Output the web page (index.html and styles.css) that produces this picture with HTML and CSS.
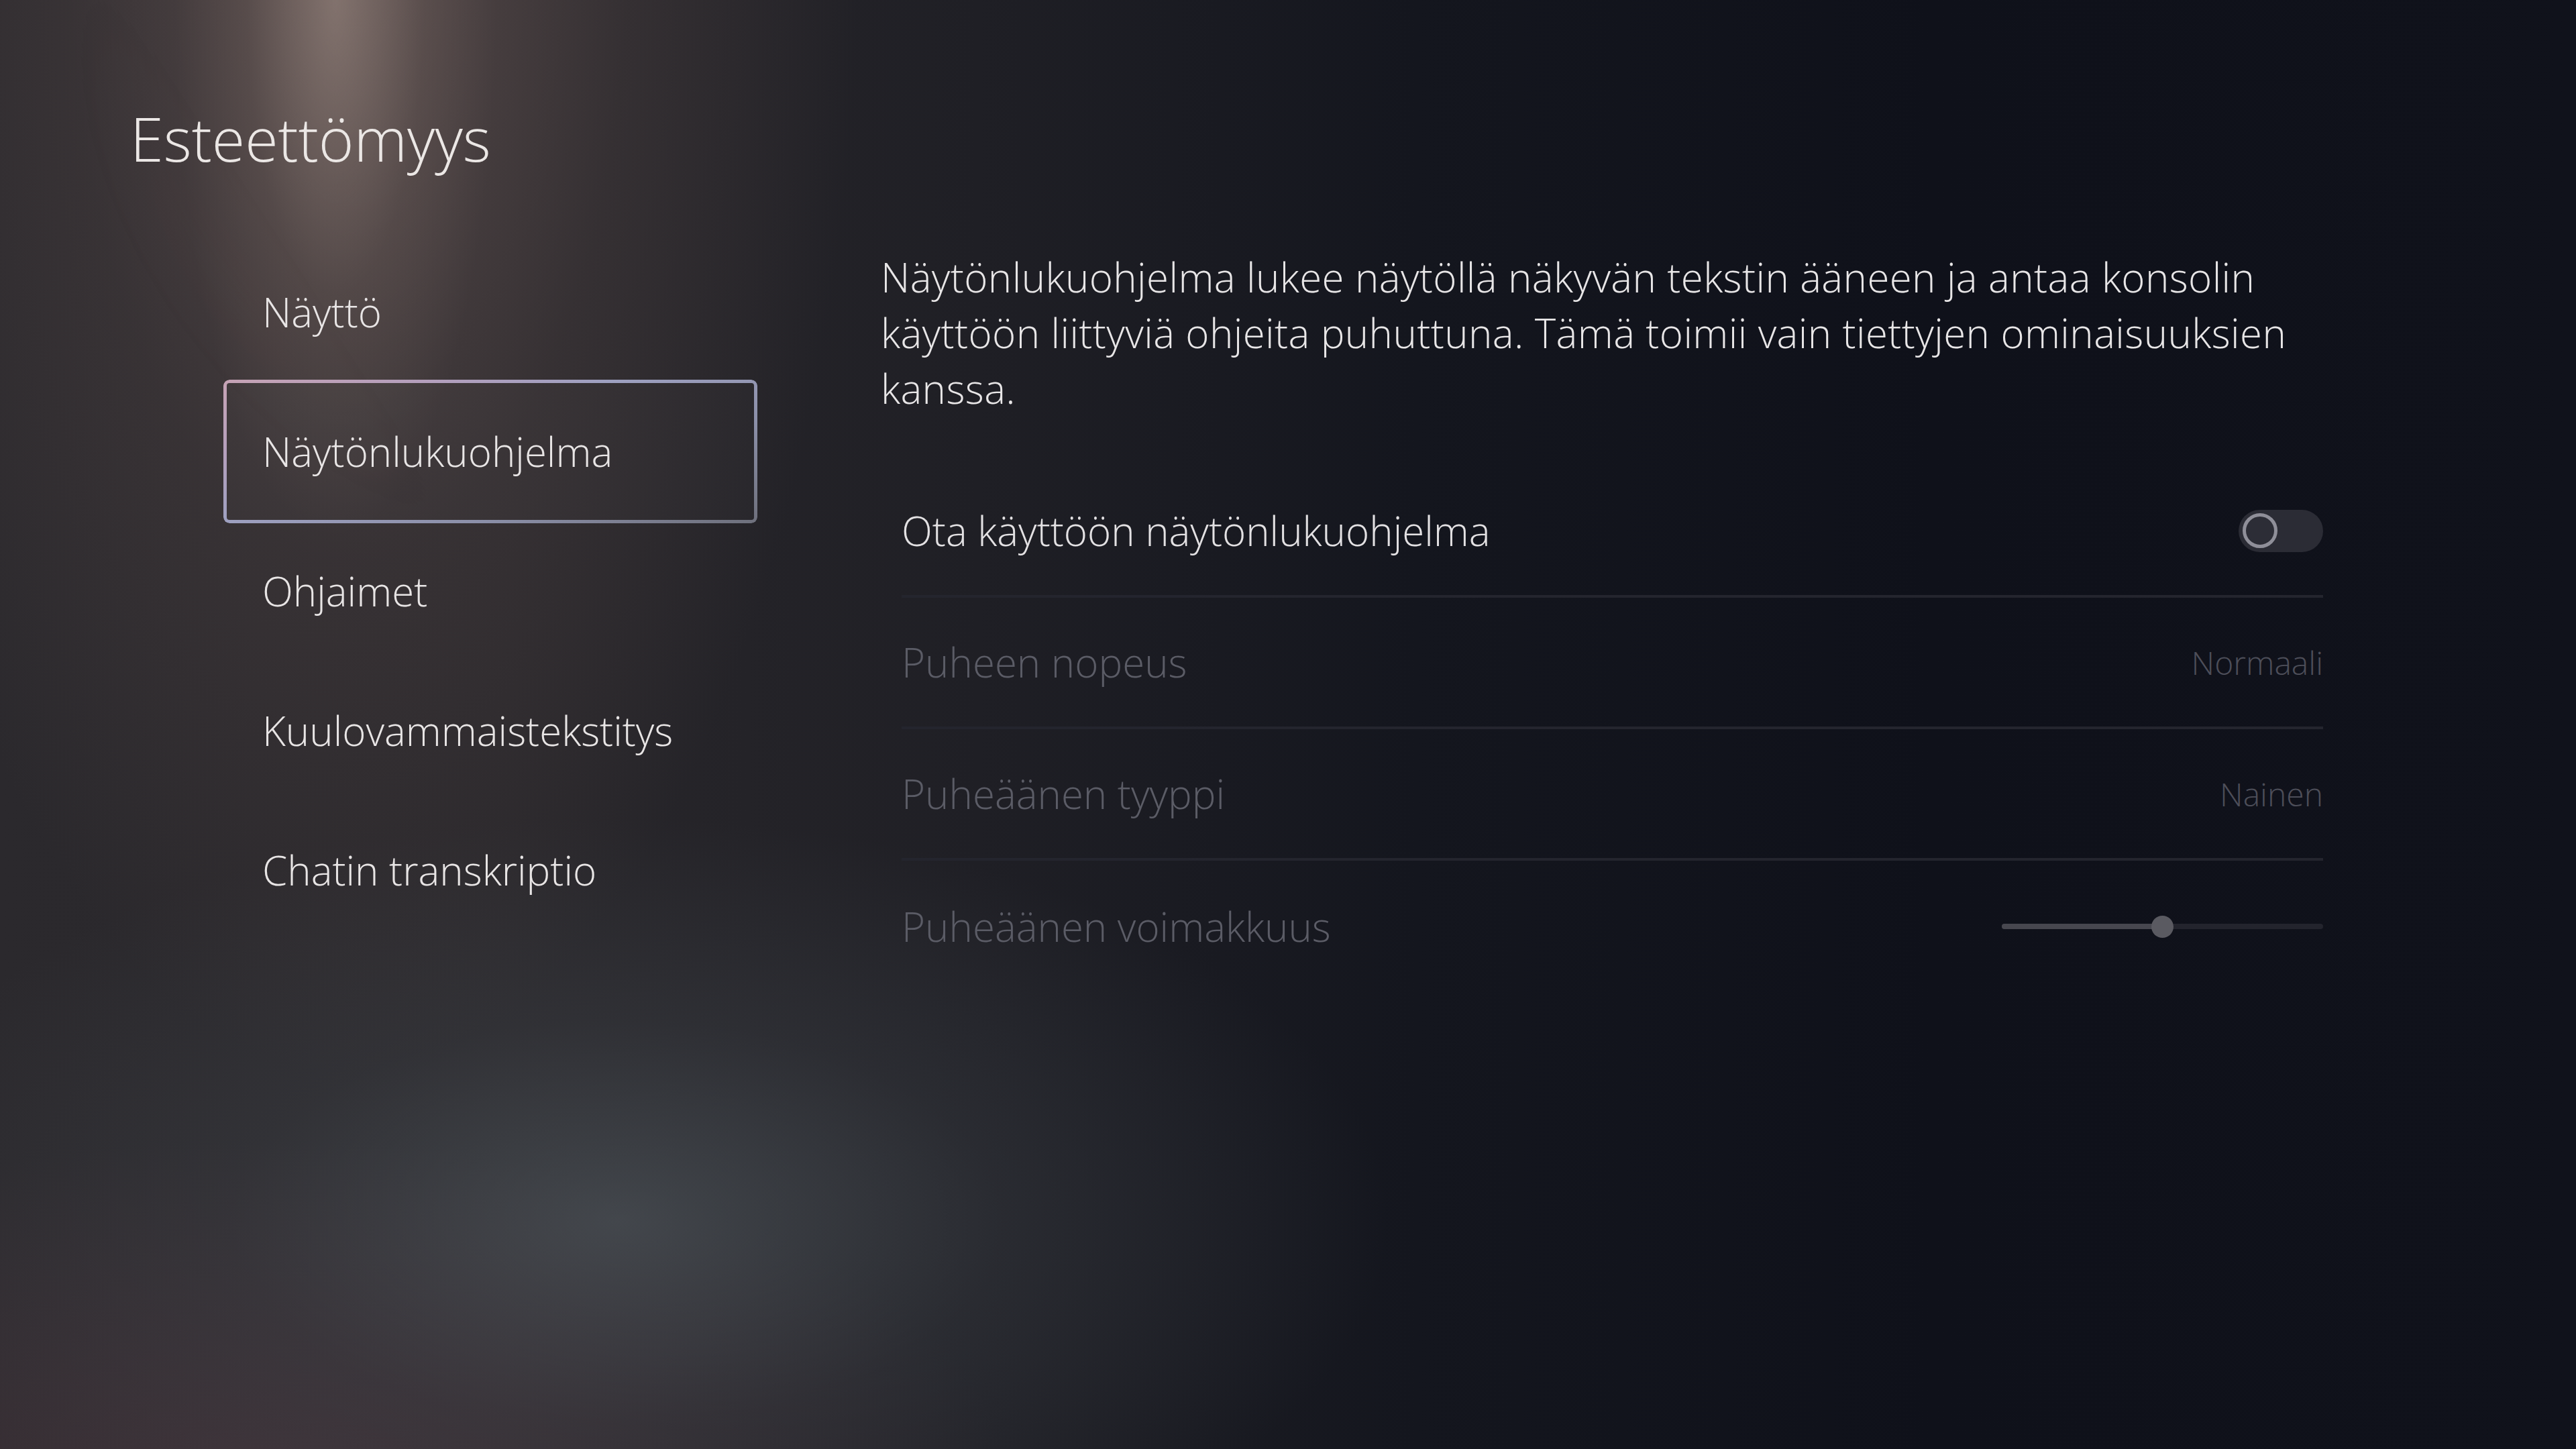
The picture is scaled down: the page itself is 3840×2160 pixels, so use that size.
FILE: index.html
```html
<!DOCTYPE html>
<html lang="fi">
<head>
<meta charset="utf-8">
<title>Esteettömyys</title>
<link rel="stylesheet" href="styles.css">
</head>
<body>
<div class="screen">
  <div class="beam"></div>
  <h1 class="title">Esteettömyys</h1>
  <div class="main">
    <nav class="nav">
      <div class="nav-item">Näyttö</div>
      <div class="nav-item selected">Näytönlukuohjelma</div>
      <div class="nav-item">Ohjaimet</div>
      <div class="nav-item">Kuulovammaistekstitys</div>
      <div class="nav-item">Chatin transkriptio</div>
    </nav>
    <section class="content">
      <p class="desc">Näytönlukuohjelma lukee näytöllä näkyvän tekstin ääneen ja antaa konsolin käyttöön liittyviä ohjeita puhuttuna. Tämä toimii vain tiettyjen ominaisuuksien kanssa.</p>
      <div class="list">
        <div class="row">
          <span class="label">Ota käyttöön näytönlukuohjelma</span>
          <span class="toggle"><span class="knob"></span></span>
        </div>
        <div class="row disabled">
          <span class="label">Puheen nopeus</span>
          <span class="value">Normaali</span>
        </div>
        <div class="row disabled">
          <span class="label">Puheäänen tyyppi</span>
          <span class="value">Nainen</span>
        </div>
        <div class="row disabled last">
          <span class="label">Puheäänen voimakkuus</span>
          <span class="slider"><span class="fill" style="width:50%"></span><span class="thumb"></span></span>
        </div>
      </div>
    </section>
  </div>
</div>
</body>
</html>
```
FILE: styles.css
```css
html, body {
  margin: 0;
  padding: 0;
}
body {
  width: 3840px;
  height: 2160px;
  overflow: hidden;
  font-family: "Open Sans", "Noto Sans", sans-serif;
  font-weight: 300;
  color: #e6e3e3;
}
.screen {
  position: relative;
  width: 3840px;
  height: 2160px;
  overflow: hidden;
  box-sizing: border-box;
  padding-top: 146px;
  background:
    radial-gradient(ellipse 240px 800px at 500px 0px, rgba(175,155,145,0.5), rgba(150,130,120,0.16) 55%, rgba(120,100,95,0) 100%),
    radial-gradient(ellipse 760px 1700px at 520px -100px, rgba(130,108,104,0.52), rgba(98,82,80,0.24) 55%, rgba(60,50,50,0) 100%),
    radial-gradient(ellipse 1150px 600px at 920px 1820px, rgba(84,92,98,0.6), rgba(72,78,84,0.26) 50%, rgba(60,64,70,0) 100%),
    radial-gradient(ellipse 1100px 500px at 400px 2200px, rgba(90,62,72,0.4), rgba(80,60,65,0) 100%),
    linear-gradient(90deg, #2b292d 0%, #29272b 20%, #1f1f25 38%, #14161e 55%, #0f111a 75%, #10121b 100%);
}
.beam {
  position: absolute;
  left: 0;
  top: 0;
  width: 3840px;
  height: 2160px;
  background: linear-gradient(57deg, rgba(0,0,0,0) 0px, rgba(0,0,0,0) 1050px, rgba(150,130,125,0.16) 1150px, rgba(150,130,125,0.06) 1260px, rgba(0,0,0,0) 1340px);
  -webkit-mask-image: radial-gradient(ellipse 1000px 900px at 1100px 0px, #000 25%, rgba(0,0,0,0) 100%);
  mask-image: radial-gradient(ellipse 1000px 900px at 1100px 0px, #000 25%, rgba(0,0,0,0) 100%);
  pointer-events: none;
}
.title {
  position: relative;
  margin: 0;
  padding-left: 194px;
  font-size: 90px;
  font-weight: 300;
  line-height: 120px;
  color: #ebe7e5;
}
.main {
  position: relative;
  display: grid;
  grid-template-columns: 796px 2150px;
  column-gap: 184px;
  padding-left: 333px;
  margin-top: 95px;
}
.nav {
  display: flex;
  flex-direction: column;
}
.nav-item {
  position: relative;
  box-sizing: border-box;
  height: 208px;
  display: flex;
  align-items: center;
  padding-left: 58px;
  font-size: 60px;
  color: #e8e5e5;
}
.nav-item.selected {
  height: 214px;
  margin: -3px 0;
  background: rgba(255,255,255,0.015);
  border-radius: 9px;
}
.nav-item.selected::before {
  content: "";
  position: absolute;
  inset: 0;
  padding: 5px;
  border-radius: 9px;
  background: linear-gradient(160deg, #c6a3b5 0%, #b49fbc 22%, #9ea0c0 42%, #8b8fa8 70%, #6e707c 100%);
  -webkit-mask: linear-gradient(#000 0 0) content-box, linear-gradient(#000 0 0);
  -webkit-mask-composite: xor;
  mask-composite: exclude;
}
.content {
  margin-top: 11px;
}
.desc {
  margin: 0;
  font-size: 60px;
  letter-spacing: 0.4px;
  line-height: 83px;
  color: #e8e6e7;
}
.list {
  margin-top: 74px;
  margin-left: 31px;
  width: 2119px;
}
.row {
  box-sizing: border-box;
  height: 196px;
  display: flex;
  align-items: center;
  justify-content: space-between;
  border-bottom: 4px solid #24252e;
  font-size: 60px;
}
.row.last {
  border-bottom: none;
}
.label {
  color: #e3e1e3;
}
.row.disabled .label {
  color: #5b5c66;
}
.value {
  font-size: 48px;
  color: #4d4e59;
}
.toggle {
  position: relative;
  width: 126px;
  height: 63px;
  border-radius: 32px;
  background: #2b2c35;
  display: flex;
  align-items: center;
  padding-left: 6px;
  box-sizing: border-box;
}
.knob {
  width: 52px;
  height: 52px;
  box-sizing: border-box;
  border-radius: 50%;
  border: 5px solid #8f8f99;
  background: #2c2d36;
}
.slider {
  position: relative;
  width: 479px;
  height: 8px;
  border-radius: 4px;
  background: #23242d;
  display: flex;
  align-items: center;
}
.fill {
  height: 8px;
  border-radius: 4px;
  background: #47474f;
}
.thumb {
  width: 33px;
  height: 33px;
  border-radius: 50%;
  background: #5a5a61;
  margin-left: -17px;
}
```
